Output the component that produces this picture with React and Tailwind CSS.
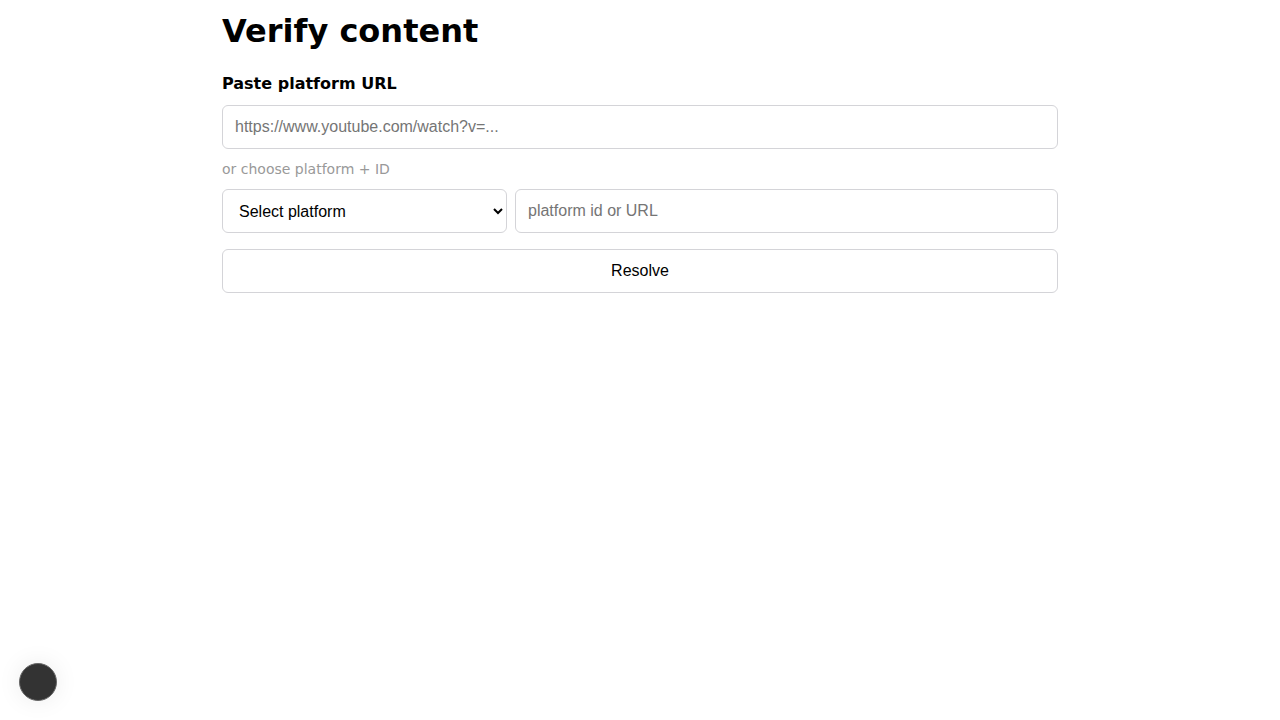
export default function App() {
    return (
        <div className="min-h-screen bg-white text-black" style={{ fontFamily: '"DejaVu Sans", sans-serif' }}>
            <div className="mx-auto max-w-[900px] px-8">
                <h1 className="pt-[9px] text-[32px] font-bold leading-[44px]">Verify content</h1>
                <div className="mt-[19px] text-[16px] font-bold leading-[24px]">Paste platform URL</div>
                <input
                    type="text"
                    placeholder="https://www.youtube.com/watch?v=..."
                    className="mt-[9px] block h-[44px] w-full rounded-md border border-[#d4d4d8] px-3 text-[16px] placeholder-[#757575] outline-none"
                    style={{ fontFamily: '"Liberation Sans", Arial, sans-serif' }}
                />
                <div className="mt-[10px] text-[14px] leading-[20px] text-[#999]">or choose platform + ID</div>
                <div className="mt-[10px] flex gap-2">
                    <select
                        defaultValue=""
                        className="h-[44px] w-[285px] shrink-0 rounded-md border border-[#d4d4d8] bg-white px-3 text-[16px] text-black"
                        style={{ fontFamily: '"Liberation Sans", Arial, sans-serif' }}
                    >
                        <option value="">Select platform</option>
                        <option value="youtube">YouTube</option>
                        <option value="tiktok">TikTok</option>
                    </select>
                    <input
                        type="text"
                        placeholder="platform id or URL"
                        className="block h-[44px] min-w-0 flex-1 rounded-md border border-[#d4d4d8] px-3 text-[16px] placeholder-[#757575] outline-none"
                        style={{ fontFamily: '"Liberation Sans", Arial, sans-serif' }}
                    />
                </div>
                <button
                    className="mt-4 block h-[44px] w-full rounded-md border border-[#d4d4d8] bg-white text-[16px] text-black"
                    style={{ fontFamily: '"Liberation Sans", Arial, sans-serif' }}
                >
                    Resolve
                </button>
            </div>
            <div className="fixed bottom-[19px] left-[19px] h-[38px] w-[38px] rounded-full border border-[#666] bg-[#333] shadow-[0_0_24px_rgba(0,0,0,0.08)]" />
        </div>
    );
}
